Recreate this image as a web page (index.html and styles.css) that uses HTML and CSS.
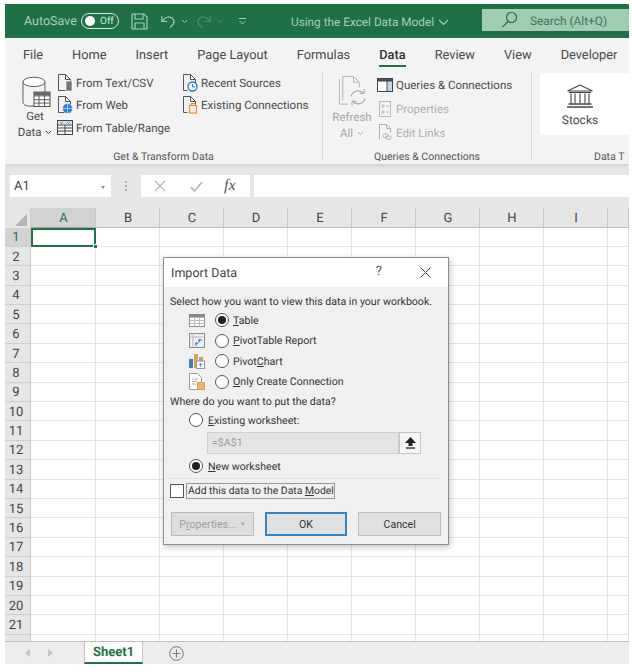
FILE: index.html
```html
<!DOCTYPE html>
<html lang="en">
<head>
<meta charset="utf-8">
<title>Using the Excel Data Model</title>
<link rel="stylesheet" href="styles.css">
</head>
<body>
<div class="app">
  <header class="titlebar">
    <span class="autosave">AutoSave</span>
    <span class="toggle"><i class="knob"></i><span>Off</span></span>
    <svg class="qa save" width="17" height="17" viewBox="0 0 17 17" fill="none" stroke="#a9cdb8" stroke-width="1.2"><path d="M1 1h12l3 3v12H1z"/><path d="M4 1v5h8V1M4 16v-6h9v6"/></svg>
    <svg class="qa undo" width="15" height="15" viewBox="0 0 17 16" fill="none" stroke="#a9cdb8" stroke-width="1.4"><path d="M1 2v6h6"/><path d="M1.500 7.500C4 4 7 2.500 10 3c4 .8 6 4.500 4 8l-4 4"/></svg>
    <svg class="chev" width="7" height="5" viewBox="0 0 7 5" fill="none" stroke="#a9cdb8"><path d="M1 1l2.500 2.500L6 1"/></svg>
    <svg class="qa redo" width="15" height="15" viewBox="0 0 17 16" fill="none" stroke="#4f9170" stroke-width="1.3"><path d="M16 2v6h-6"/><path d="M15.500 7.500C13 4 10 2.500 7 3c-4 .8-6 4.500-4 8l4 4"/></svg>
    <svg class="chev" width="7" height="5" viewBox="0 0 7 5" fill="none" stroke="#4f9170"><path d="M1 1l2.500 2.500L6 1"/></svg>
    <svg class="qa custom" width="9" height="9" viewBox="0 0 9 9" fill="none" stroke="#a9cdb8"><path d="M1 1.500h7M1.500 4l3 3 3-3"/></svg>
    <span class="doc">Using the Excel Data Model <svg width="11" height="7" viewBox="0 0 11 7" fill="none" stroke="#a9cdb8" stroke-width="1.100"><path d="M1 1l4.500 4.500L10 1"/></svg></span>
    <div class="search">
      <svg width="17" height="17" viewBox="0 0 17 17" fill="none" stroke="#2b6e4a" stroke-width="1.200"><circle cx="10.500" cy="6.500" r="5"/><path d="M7 10.500L1.500 16"/></svg>
      <span>Search (Alt+Q)</span>
    </div>
  </header>

  <nav class="tabs">
    <span class="tab">File</span>
    <span class="tab">Home</span>
    <span class="tab">Insert</span>
    <span class="tab">Page Layout</span>
    <span class="tab">Formulas</span>
    <span class="tab active">Data</span>
    <span class="tab">Review</span>
    <span class="tab">View</span>
    <span class="tab">Developer</span>
  </nav>

  <section class="ribbon">
    <div class="group g-transform">
      <div class="group-body">
        <div class="big getdata">
          <svg width="29" height="33" viewBox="0 0 34 39" fill="none" stroke="#555" stroke-width="1.100"><path d="M1 7v24c0 3 4 4.500 8 4.500h5M27 7v14"/><ellipse cx="14" cy="7" rx="13" ry="5.500" fill="#fff"/><rect x="14" y="19" width="19" height="17" fill="#fff" stroke="#444"/><path d="M14 23.500h19M14 28h19M14 32h19M20 19v17M26.500 19v17" stroke="#555"/><rect x="14" y="19" width="19" height="4" fill="#666" stroke="none"/></svg>
          <span class="big-label">Get<br>Data <svg class="chev-in" width="7" height="5" viewBox="0 0 7 5" fill="none" stroke="#444"><path d="M1 1l2.500 2.500L6 1"/></svg></span>
        </div>
        <div class="col col-a">
          <div class="item"><svg width="15" height="18" viewBox="0 0 15 18" fill="none" stroke="#555"><path d="M.5.500h7l5 5v11H.5zM7.500.500v5h5"/><rect x="8" y="7" width="6" height="10" fill="#777" stroke="#fff" stroke-width=".6"/></svg><span>From Text/CSV</span></div>
          <div class="item"><svg width="15" height="18" viewBox="0 0 15 18" fill="none" stroke="#555"><path d="M.5.500h7l5 5v11H.5zM7.500.500v5h5"/><circle cx="9.500" cy="12.500" r="5" fill="#2b7cd3" stroke="#fff" stroke-width=".6"/><path d="M4.500 12.500h10M9.500 7.500v10" stroke="#cfe3f7" stroke-width=".7"/></svg><span>From Web</span></div>
          <div class="item"><svg class="wide" width="16" height="15" viewBox="0 0 16 15" fill="none" stroke="#444"><rect x=".5" y=".5" width="15" height="14" fill="#fff"/><rect x="1" y="1" width="14" height="3.500" fill="#cfe3f2" stroke="none"/><path d="M.5 5h15M.5 8h15M.5 11h15M8 5v9.500"/><path d="M3 2l1.500 1.500L6 2M10 2l1.500 1.500L13 2" stroke="#555" stroke-width=".7"/></svg><span>From Table/Range</span></div>
        </div>
        <div class="col col-b">
          <div class="item"><svg width="15" height="18" viewBox="0 0 15 18" fill="none" stroke="#555"><path d="M.5 16.500V.5h7l5 5v4M.5 16.500h4M7.500.500v5h5"/><circle cx="9.500" cy="12.500" r="4.500" fill="#fff" stroke="#1f78c8" stroke-width="1.300"/><path d="M9.500 10v3h2.500" stroke="#1f78c8"/></svg><span>Recent Sources</span></div>
          <div class="item"><svg width="15" height="18" viewBox="0 0 15 18" fill="none" stroke="#555"><path d="M.5 16.500V.5h7l5 5v3M.5 16.500h4M7.500.500v5h5"/><rect x="6.500" y="9.500" width="7" height="7.500" fill="#fdf1dd" stroke="#e18b2c" stroke-width="1.100"/><path d="M8 9V7.500h4V9" stroke="#e18b2c"/></svg><span>Existing Connections</span></div>
        </div>
      </div>
      <div class="group-label">Get &amp; Transform Data</div>
    </div>

    <div class="group g-queries">
      <div class="group-body">
        <div class="big refresh">
          <svg width="29" height="33" viewBox="0 0 29 34" fill="none" stroke="#b4b4b4"><path d="M4.500 26V1.500h11l6 6V13M15.500 1.500v6h6"/><path d="M1 4.500V30h9"/><path d="M13 22a7.500 7.500 0 0 1 13-3M27.500 24a7.500 7.500 0 0 1-13 3" stroke="#a8a8a8" stroke-width="1.200"/><path d="M26.500 14.500V19h-4.500M14 31.500V27h4.500" stroke="#a8a8a8"/></svg>
          <span class="big-label">Refresh<br>All <svg class="chev-in" width="7" height="5" viewBox="0 0 7 5" fill="none" stroke="#a5a5a5"><path d="M1 1l2.500 2.500L6 1"/></svg></span>
        </div>
        <div class="col col-c">
          <div class="item"><svg width="16" height="14" viewBox="0 0 16 14" fill="none" stroke="#444"><rect x=".5" y=".5" width="15" height="13" fill="#fff"/><rect x=".5" y=".5" width="15" height="2.500" fill="#555"/><rect x="10" y="3" width="5.500" height="10.500" fill="#bcd9ef"/></svg><span>Queries &amp; Connections</span></div>
          <div class="item off"><svg width="16" height="16" viewBox="0 0 16 16" fill="none" stroke="#b9b9b9"><rect x="2.500" y=".5" width="11" height="15"/><path d="M5 4h2v2H5zM5 10h2v2H5zM9 5h3M9 11h3" /></svg><span>Properties</span></div>
          <div class="item off"><svg width="16" height="17" viewBox="0 0 16 17" fill="none" stroke="#b0b0b0"><path d="M2.500 15.500V.5h7l4 4v4M9.500.500v4h4"/><rect x="6" y="10" width="5" height="3.500" rx="1.700"/><rect x="9" y="12" width="5" height="3.500" rx="1.700"/></svg><span>Edit Links</span></div>
        </div>
      </div>
      <div class="group-label">Queries &amp; Connections</div>
    </div>

    <div class="group g-types">
      <div class="group-body">
        <div class="stocks">
          <svg width="28" height="24" viewBox="0 0 28 24" fill="none" stroke="#444" stroke-width="1.100"><path d="M14 1L1.500 7h25zM3 8.500h22"/><path d="M5 9.500v9.500M9 9.500v9.500M14 9.500v9.500M19 9.500v9.500M23 9.500v9.500"/><path d="M2.500 20h23M1 23h26" stroke-width="1.500"/></svg>
          <span>Stocks</span>
        </div>
      </div>
      <div class="group-label clip">Data T</div>
    </div>
  </section>

  <section class="formula">
    <div class="namebox"><span>A1</span><i class="tri"></i></div>
    <div class="grip"></div>
    <div class="fxbox">
      <svg width="12" height="12" viewBox="0 0 12 12" stroke="#b5b5b5" stroke-width="1.200" fill="none"><path d="M1 1l10 10M11 1L1 11"/></svg>
      <svg width="13" height="11" viewBox="0 0 13 11" stroke="#b5b5b5" stroke-width="1.700" fill="none"><path d="M1 6l3.500 4L12 1"/></svg>
      <span class="fx">fx</span>
    </div>
    <div class="fxinput"></div>
  </section>

  <section class="sheet">
    <div class="corner"><i></i></div>
    <div class="colhead sel">A</div><div class="colhead">B</div><div class="colhead">C</div><div class="colhead">D</div><div class="colhead">E</div><div class="colhead">F</div><div class="colhead">G</div><div class="colhead">H</div><div class="colhead">I</div><div class="colhead"></div>
    <div class="rowhead sel">1</div><div class="cell active"><i></i></div><div class="cell"></div><div class="cell"></div><div class="cell"></div><div class="cell"></div><div class="cell"></div><div class="cell"></div><div class="cell"></div><div class="cell"></div><div class="cell"></div>
    <div class="rowhead">2</div><div class="cell"></div><div class="cell"></div><div class="cell"></div><div class="cell"></div><div class="cell"></div><div class="cell"></div><div class="cell"></div><div class="cell"></div><div class="cell"></div><div class="cell"></div>
    <div class="rowhead">3</div><div class="cell"></div><div class="cell"></div><div class="cell"></div><div class="cell"></div><div class="cell"></div><div class="cell"></div><div class="cell"></div><div class="cell"></div><div class="cell"></div><div class="cell"></div>
    <div class="rowhead">4</div><div class="cell"></div><div class="cell"></div><div class="cell"></div><div class="cell"></div><div class="cell"></div><div class="cell"></div><div class="cell"></div><div class="cell"></div><div class="cell"></div><div class="cell"></div>
    <div class="rowhead">5</div><div class="cell"></div><div class="cell"></div><div class="cell"></div><div class="cell"></div><div class="cell"></div><div class="cell"></div><div class="cell"></div><div class="cell"></div><div class="cell"></div><div class="cell"></div>
    <div class="rowhead">6</div><div class="cell"></div><div class="cell"></div><div class="cell"></div><div class="cell"></div><div class="cell"></div><div class="cell"></div><div class="cell"></div><div class="cell"></div><div class="cell"></div><div class="cell"></div>
    <div class="rowhead">7</div><div class="cell"></div><div class="cell"></div><div class="cell"></div><div class="cell"></div><div class="cell"></div><div class="cell"></div><div class="cell"></div><div class="cell"></div><div class="cell"></div><div class="cell"></div>
    <div class="rowhead">8</div><div class="cell"></div><div class="cell"></div><div class="cell"></div><div class="cell"></div><div class="cell"></div><div class="cell"></div><div class="cell"></div><div class="cell"></div><div class="cell"></div><div class="cell"></div>
    <div class="rowhead">9</div><div class="cell"></div><div class="cell"></div><div class="cell"></div><div class="cell"></div><div class="cell"></div><div class="cell"></div><div class="cell"></div><div class="cell"></div><div class="cell"></div><div class="cell"></div>
    <div class="rowhead">10</div><div class="cell"></div><div class="cell"></div><div class="cell"></div><div class="cell"></div><div class="cell"></div><div class="cell"></div><div class="cell"></div><div class="cell"></div><div class="cell"></div><div class="cell"></div>
    <div class="rowhead">11</div><div class="cell"></div><div class="cell"></div><div class="cell"></div><div class="cell"></div><div class="cell"></div><div class="cell"></div><div class="cell"></div><div class="cell"></div><div class="cell"></div><div class="cell"></div>
    <div class="rowhead">12</div><div class="cell"></div><div class="cell"></div><div class="cell"></div><div class="cell"></div><div class="cell"></div><div class="cell"></div><div class="cell"></div><div class="cell"></div><div class="cell"></div><div class="cell"></div>
    <div class="rowhead">13</div><div class="cell"></div><div class="cell"></div><div class="cell"></div><div class="cell"></div><div class="cell"></div><div class="cell"></div><div class="cell"></div><div class="cell"></div><div class="cell"></div><div class="cell"></div>
    <div class="rowhead">14</div><div class="cell"></div><div class="cell"></div><div class="cell"></div><div class="cell"></div><div class="cell"></div><div class="cell"></div><div class="cell"></div><div class="cell"></div><div class="cell"></div><div class="cell"></div>
    <div class="rowhead">15</div><div class="cell"></div><div class="cell"></div><div class="cell"></div><div class="cell"></div><div class="cell"></div><div class="cell"></div><div class="cell"></div><div class="cell"></div><div class="cell"></div><div class="cell"></div>
    <div class="rowhead">16</div><div class="cell"></div><div class="cell"></div><div class="cell"></div><div class="cell"></div><div class="cell"></div><div class="cell"></div><div class="cell"></div><div class="cell"></div><div class="cell"></div><div class="cell"></div>
    <div class="rowhead">17</div><div class="cell"></div><div class="cell"></div><div class="cell"></div><div class="cell"></div><div class="cell"></div><div class="cell"></div><div class="cell"></div><div class="cell"></div><div class="cell"></div><div class="cell"></div>
    <div class="rowhead">18</div><div class="cell"></div><div class="cell"></div><div class="cell"></div><div class="cell"></div><div class="cell"></div><div class="cell"></div><div class="cell"></div><div class="cell"></div><div class="cell"></div><div class="cell"></div>
    <div class="rowhead">19</div><div class="cell"></div><div class="cell"></div><div class="cell"></div><div class="cell"></div><div class="cell"></div><div class="cell"></div><div class="cell"></div><div class="cell"></div><div class="cell"></div><div class="cell"></div>
    <div class="rowhead">20</div><div class="cell"></div><div class="cell"></div><div class="cell"></div><div class="cell"></div><div class="cell"></div><div class="cell"></div><div class="cell"></div><div class="cell"></div><div class="cell"></div><div class="cell"></div>
    <div class="rowhead">21</div><div class="cell"></div><div class="cell"></div><div class="cell"></div><div class="cell"></div><div class="cell"></div><div class="cell"></div><div class="cell"></div><div class="cell"></div><div class="cell"></div><div class="cell"></div>
    <div class="rowhead"></div><div class="cell"></div><div class="cell"></div><div class="cell"></div><div class="cell"></div><div class="cell"></div><div class="cell"></div><div class="cell"></div><div class="cell"></div><div class="cell"></div><div class="cell"></div>
  </section>

  <footer class="sheetbar">
    <span class="nav">
      <svg width="5" height="8" viewBox="0 0 5 8"><path d="M5 0v8L0 4z" fill="#c4c4c4"/></svg>
      <svg width="5" height="8" viewBox="0 0 5 8"><path d="M0 0v8l5-4z" fill="#c4c4c4"/></svg>
    </span>
    <span class="sheettab">Sheet1</span>
    <svg class="add" width="15" height="15" viewBox="0 0 15 15" fill="none" stroke="#777"><circle cx="7.500" cy="7.500" r="6.800"/><path d="M7.500 3.500v8M3.500 7.500h8" stroke-width="1.100"/></svg>
  </footer>

  <div class="dialog">
    <div class="dlg-title">
      <span class="dlg-name">Import Data</span>
      <span class="dlg-help">?</span>
      <svg width="11" height="11" viewBox="0 0 11 11" fill="none" stroke="#444"><path d="M.5.500l10 10M10.500.500l-10 10"/></svg>
    </div>
    <div class="dlg-body">
      <p class="dlg-text">Select how you want to view this data in your workbook.</p>
      <div class="opts">
        <div class="opt">
          <svg width="16" height="13" viewBox="0 0 16 13" fill="#fff" stroke="#8d8d8d"><rect x=".5" y=".5" width="15" height="12"/><path d="M.5 3.500h15M.5 6.500h15M.5 9.500h15M5.500 3.500v9M10.500 3.500v9" stroke="#bbb"/><rect x=".5" y=".5" width="15" height="2.500" fill="#888" stroke="none"/></svg>
          <i class="radio on"></i><label><u>T</u>able</label>
        </div>
        <div class="opt">
          <svg width="16" height="15" viewBox="0 0 16 15" fill="#eee" stroke="#8d8d8d"><rect x=".5" y=".5" width="15" height="14"/><path d="M.5 4h15M4 .5v14" stroke="#bbb"/><path d="M6 11c3 0 5-2 5-5M6 11l2-2M6 11l2 2M11 6L9 8M11 6l2 2" stroke="#2b7cd3" fill="none"/></svg>
          <i class="radio"></i><label><u>P</u>ivotTable Report</label>
        </div>
        <div class="opt">
          <svg width="16" height="16" viewBox="0 0 16 16"><rect x="0" y="6" width="4" height="9" fill="#3f7fb9"/><rect x="5" y="1" width="4" height="14" fill="#d4a35e"/><rect x="10" y="4" width="4" height="4" fill="#c9a06a"/><rect x="7.500" y="8" width="8" height="7.500" fill="#fff" stroke="#9a9a9a"/><path d="M10 11.500h3.500M11.500 10v4" stroke="#5b95c9"/></svg>
          <i class="radio"></i><label>Pivot<u>C</u>hart</label>
        </div>
        <div class="opt">
          <svg width="16" height="17" viewBox="0 0 16 17" fill="#fff" stroke="#9a9a9a"><path d="M.5.500h8l4 4V16.500H.5z"/><path d="M3 6h6M3 8.500h5M3 11h4" stroke="#aaa"/><rect x="8.500" y="9.500" width="7" height="7" fill="#e9b666" stroke="#d8a14c"/></svg>
          <i class="radio"></i><label><u>O</u>nly Create Connection</label>
        </div>
      </div>
      <p class="dlg-text where">Where do you want to put the data?</p>
      <div class="place">
        <div class="opt2"><i class="radio"></i><label><u>E</u>xisting worksheet:</label></div>
        <div class="refline">
          <div class="refinput">=$A$1</div>
          <div class="refbtn"><svg width="11" height="12" viewBox="0 0 11 12"><path d="M5.500 0L11 6H7.500v3h-4V6H0z" fill="#222"/><path d="M1 11h9" stroke="#222" stroke-width="1.300"/></svg></div>
        </div>
        <div class="opt2"><i class="radio on"></i><label><u>N</u>ew worksheet</label></div>
      </div>
      <div class="rule"></div>
      <div class="check"><i class="box"></i><label>Add this data to the Data <u>M</u>odel</label></div>
      <div class="btns">
        <button class="btn props" type="button" disabled><span>P<u>r</u>operties...</span><small>▾</small></button>
        <button class="btn primary" type="button">OK</button>
        <button class="btn" type="button">Cancel</button>
      </div>
    </div>
  </div>
</div>
</body>
</html>
```
FILE: styles.css
```css
* { box-sizing: border-box; }
html, body { margin: 0; height: 672px; overflow: hidden; background: #fff; }
body { padding: 4px 3px 0 5px; font-family: Roboto, "Open Sans", sans-serif; color: #444; text-rendering: geometricPrecision; }
.app { position: relative; width: 624px; height: 660px; overflow: hidden; }

.titlebar { height: 34px; background: #1f7145; display: flex; align-items: center; color: #a9cdb8; font-size: 12.500px; padding-left: 19px; }
.autosave { width: 57px; padding-top: 1px; }
.toggle { width: 38px; height: 16px; border: 1px solid #d8e8df; border-radius: 8px; display: flex; align-items: center; padding: 0 3px; gap: 5px; font-size: 10px; color: #d8e8df; flex: none; }
.knob { width: 10px; height: 10px; border-radius: 50%; background: #fff; }
.qa { flex: none; }
.save { margin-left: 12px; }
.undo { margin-left: 13px; }
.chev { margin-left: 5px; flex: none; }
.redo { margin-left: 8px; }
.custom { margin-left: 15px; }
.doc { margin-left: 44px; width: 186px; padding-top: 2px; white-space: nowrap; display: flex; align-items: center; gap: 4px; color: #a9cdb8; font-size: 11.800px; }
.search { margin-left: auto; width: 147px; height: 22px; background: #a0ccb2; display: flex; align-items: center; padding-left: 19px; gap: 12px; color: #3f7659; margin-top: -1px; margin-bottom: 2px; font-size: 11.900px; flex: none; }
.search span { padding-top: 2px; }

.tabs { height: 34px; background: #f3f3f3; display: flex; align-items: center; font-size: 12.800px; color: #4a4a4a; padding-left: 18px; gap: 29px; }
.tab { position: relative; white-space: nowrap; }
.tab.active { font-weight: 500; color: #333; }
.tab.active::after { content: ""; position: absolute; left: 0; right: 0; top: 17px; height: 2.500px; background: #217346; }

.ribbon { height: 92px; background: #f3f3f3; display: flex; font-size: 11.500px; color: #4a4a4a; box-shadow: 0 3px 3px -1px #cfcfcf; position: relative; z-index: 1; }
.group { display: flex; flex-direction: column; flex: none; }
.group-body { flex: none; height: 77px; display: flex; }
.group-label { height: 11px; line-height: 16px; font-size: 10.500px; text-align: center; color: #555; white-space: nowrap; }
.group-label.clip { padding-left: 62px; text-align: left; }
.g-transform { width: 318px; border-right: 1px solid #d8d8d8; margin-bottom: 4px; }
.g-queries { width: 209px; border-right: 1px solid #d8d8d8; margin-bottom: 4px; }
.g-types { width: 97px; margin-bottom: 4px; }
.big { display: flex; flex-direction: column; align-items: center; line-height: 16px; text-align: center; }
.big-label { display: block; margin-top: -1px; }
.chev-in { vertical-align: 1px; margin-left: 1px; }
.getdata { width: 38px; margin-left: 11px; padding-top: 4px; }
.getdata > svg { margin-left: 3px; }
.col { display: flex; flex-direction: column; gap: 3.500px; padding-top: 1px; }
.item { display: flex; align-items: center; gap: 3px; height: 19px; white-space: nowrap; }
.item svg { flex: none; }
.item .wide { margin-left: -1px; }
.col-a { margin-left: 4px; width: 125px; }
.refresh { width: 48px; margin-left: 5px; padding-top: 3px; color: #a5a5a5; }
.refresh .big-label { margin-top: 1px; }
.col-c { margin-left: 1px; padding-top: 3px; gap: 5px; }
.item.off { color: #b0b0b0; }
.stocks { margin: 1px 0 0 8px; width: 89px; height: 62px; background: #fff; display: flex; flex-direction: column; align-items: center; padding: 11px 9px 0 0; gap: 5px; font-size: 12px; }

.formula { height: 44px; background: #e6e6e6; display: flex; align-items: center; padding: 0 0 0 5px; font-size: 13px; }
.namebox { width: 101px; height: 22px; background: #fff; display: flex; align-items: center; justify-content: space-between; padding: 1px 6px 0 4px; color: #444; }
.tri { border: 2.500px solid transparent; border-top: 3px solid #888; margin-top: 3px; }
.grip { width: 2px; height: 11px; margin: 0 14px; background: repeating-linear-gradient(#aaa 0 2px, transparent 2px 4px); }
.fxbox { width: 109px; height: 22px; background: #fff; display: flex; align-items: center; gap: 24px; padding-left: 13px; }
.fx { font-family: "Liberation Serif", serif; font-style: italic; font-size: 16px; color: #555; margin-left: -3px; }
.fxinput { flex: 1; height: 22px; background: #fff; margin-left: 4px; }

.sheet { height: 433px; display: grid; grid-template-columns: 26px 65px repeat(8, 64px) 21px; grid-template-rows: 19.500px repeat(22, 19.400px); overflow: hidden; background: #fff; font-size: 13px; color: #444; }
.corner { background: #e6e6e6; display: flex; justify-content: flex-end; align-items: flex-end; padding: 0 3px 2px 0; border-right: 1px solid #d0d0d0; }
.corner i { width: 0; height: 0; border-left: 12px solid transparent; border-bottom: 12px solid #b5b5b5; }
.colhead { background: #e6e6e6; border-right: 1px solid #c8c8c8; border-bottom: 1px solid #bdbdbd; display: flex; align-items: center; justify-content: center; padding: 2px 0 0 1px; }
.colhead.sel { background: #d2d2d2; color: #217346; border-bottom-color: #a9a9a9; }
.rowhead { background: #e6e6e6; border-bottom: 1px solid #cfcfcf; border-right: 1px solid #c8c8c8; display: flex; align-items: center; justify-content: center; padding: 2px 3px 0 0; }
.rowhead.sel { background: #d2d2d2; color: #217346; }
.cell { border-right: 1px solid #e4e4e4; border-bottom: 1px solid #e4e4e4; }
.cell.active { border: 2px solid #217346; position: relative; }
.cell.active i { position: absolute; right: -4px; bottom: -4px; width: 5px; height: 5px; background: #217346; border: 1px solid #fff; }

.sheetbar { height: 23px; background: #ededed; border-top: 1px solid #bdbdbd; display: flex; align-items: center; box-shadow: 0 1px 0 #e4e4e4; }
.nav { display: flex; gap: 18px; margin-left: 20px; width: 59px; }
.sheettab { width: 59px; height: 22px; background: #fff; border-bottom: 2px solid #217346; border-left: 1px solid #c4c4c4; border-right: 1px solid #c4c4c4; color: #217346; font-weight: 700; font-size: 13px; display: flex; align-items: center; justify-content: center; margin-top: -1px; padding-top: 2px; }
.add { margin-left: 26px; }

.dialog { position: absolute; left: 158px; top: 253px; width: 286px; height: 288px; background: #f0f0f0; border: 1px solid #8e8e8e; box-shadow: 1px 2px 6px rgba(0,0,0,.25); z-index: 2; font-size: 10.600px; color: #333; display: flex; flex-direction: column; }
.dlg-title { height: 29px; background: #fff; display: flex; align-items: center; padding: 0 17px 0 7px; flex: none; }
.dlg-name { font-size: 12.500px; flex: 1; color: #444; padding-top: 1px; }
.dlg-help { font-size: 13px; margin-right: 38px; margin-top: -2px; color: #555; }
.dlg-body { padding: 7px 7px 0 6px; flex: 1; display: flex; flex-direction: column; }
.dlg-text { margin: 0; line-height: 16px; white-space: nowrap; }
.opts { display: flex; flex-direction: column; }
.opt { height: 20.500px; display: flex; align-items: center; padding-left: 19px; }
.opt svg { width: 16px; flex: none; margin-right: 10px; }
.radio { width: 14px; height: 14px; border-radius: 50%; border: 1px solid #555; background: #fff; display: flex; align-items: center; justify-content: center; flex: none; margin-right: 4px; }
.radio.on::after { content: ""; width: 8px; height: 8px; border-radius: 50%; background: #222; }
.where { margin-top: 2px; }
.place { padding-left: 19px; }
.opt2 { display: flex; align-items: center; height: 20px; }
.opt2 .radio { margin-right: 5px; }
.refline { display: flex; height: 22px; margin: 2px 0 2px 18px; }
.refinput { width: 192px; background: #e4e4e4; border: 1px solid #cfcfcf; color: #9a9a9a; padding: 2px 4px; line-height: 16px; }
.refbtn { width: 22px; background: #f5f5f5; border: 1px solid #c4c4c4; display: flex; align-items: center; justify-content: center; }
.rule { height: 1px; background: #e2e2e2; margin: 2px 0 4px; }
.check { display: flex; align-items: center; gap: 2px; height: 16px; }
.box { width: 14px; height: 14px; background: #fff; border: 1px solid #555; flex: none; }
.check label { height: 16px; border: 1px solid #999; padding: 0 0 0 1px; width: 149px; line-height: 14px; white-space: nowrap; font-size: 10.400px; }
.btns { display: flex; gap: 11px; margin: 13px 0 0 1px; }
.btn { width: 83px; height: 24px; background: #e1e1e1; border: 1px solid #bcbcbc; font: inherit; color: #333; padding: 0; display: flex; align-items: center; justify-content: center; gap: 5px; }
.btn small { font-size: 7px; }
.btn.primary { border: 2px solid #2f86c9; }
.props { color: #a0a0a0; background: #dedede; }
```
